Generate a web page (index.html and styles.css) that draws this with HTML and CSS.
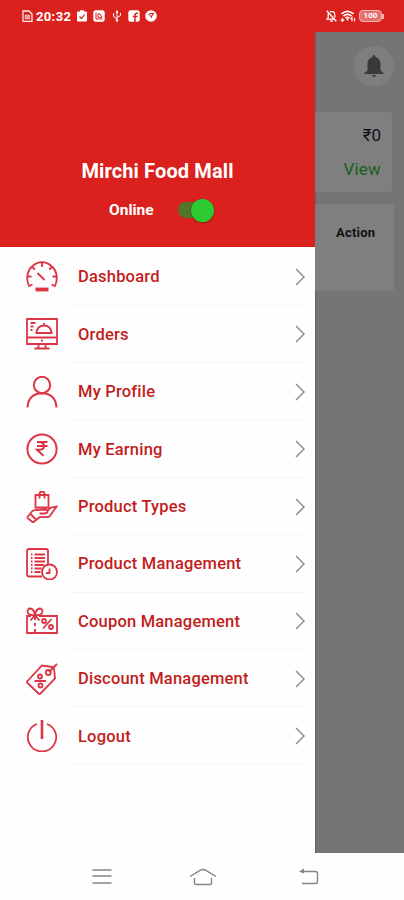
FILE: index.html
```html
<!DOCTYPE html>
<html lang="en">
<head>
<meta charset="utf-8">
<title>Mirchi Food Mall</title>
<link rel="stylesheet" href="styles.css">
</head>
<body>
<div class="status">
  <div class="status-left">
    <svg width="11" height="12" viewBox="0 0 11 12" fill="none" stroke="#fff" stroke-opacity=".9"><path d="M1 1h6l3 3v7.300H1z" stroke-width="1.300"/><path d="M3.500 5.500l4 3m0-3l-4 3M3.300 5.300h4.400v3.400H3.300z" stroke-width=".8"/></svg>
    <span class="time">20:32</span>
    <svg class="s1" width="10" height="12" viewBox="0 0 10 12"><path d="M1 1.500h2V.300h4v1.200h2q1 0 1 1v8q0 1-1 1H1q-1 0-1-1v-8q0-1 1-1z" fill="#fff"/><path d="M2.500 6.500l2 2 3-4" fill="none" stroke="#db211e" stroke-width="1.200"/></svg>
    <svg class="s2" width="12" height="12" viewBox="0 0 12 12"><rect x=".3" y=".3" width="11.400" height="11.400" rx="2.500" fill="#fff"/><path d="M3 2.500v6.500h6.500M5 3.500v3.800h4M5 4h2l2 3" fill="none" stroke="#db211e"/></svg>
    <svg class="s3" width="10" height="12" viewBox="0 0 10 12" fill="none" stroke="#fff"><path d="M5 1.500v9M1.500 4v2.500L5 9M8.500 3v2.500L5 7.500"/><path d="M3.300 2.700L5 0l1.700 2.700z" fill="#fff" stroke="none"/><circle cx="5" cy="10.500" r="1.200" fill="#fff" stroke="none"/><circle cx="1.500" cy="4" r=".7" fill="#fff" stroke="none"/></svg>
    <svg class="s4" width="12" height="12" viewBox="0 0 12 12"><rect x=".3" y=".3" width="11.400" height="11.400" rx="2.500" fill="#fff"/><path d="M7 12V5.200q0-2 2-2h1M4.800 6.500h4.700" fill="none" stroke="#db211e" stroke-width="1.500"/></svg>
    <svg class="s5" width="12" height="12" viewBox="0 0 12 12"><circle cx="6" cy="6" r="5.800" fill="#fff"/><path d="M3.500 5Q5 2.800 8.500 3.500L6.500 6.500 4.800 5.500M6 7.500h1" fill="none" stroke="#db211e" stroke-width="1.100"/></svg>
  </div>
  <div class="status-right">
    <svg width="11" height="12" viewBox="0 0 11 12" fill="none" stroke="#fff" stroke-width="1.300"><path d="M.7.700l9.600 10.600M2.200 3.500v4L1 9.200h7M3.800 1.900Q8.600.500 8.800 4.500v3M4.300 11h2.500"/></svg>
    <svg width="16" height="12" viewBox="0 0 16 12" fill="none" stroke="#fff" stroke-width="1.700"><path d="M1.500 3.800Q7.500-1 13.500 3.800M3.500 6Q7.500 2.800 11.500 6M5.500 8.200Q7.500 6.500 9.500 8.200"/><circle cx="7.500" cy="9.500" r="1" fill="#fff" stroke="none"/><path d="M2.500 8v3M.8 9.500L2.500 11.300 4.200 9.500M12 11.500v-4l-1.400 1.500M14.500 8v3.500" stroke-width="1.100"/></svg>
    <span class="battery">100</span><i class="nub"></i>
  </div>
</div>

<div class="main">
  <div class="drawer">
    <div class="head">
      <h1>Mirchi Food Mall</h1>
      <div class="online"><span>Online</span><span class="switch"><i></i></span></div>
    </div>
    <ul class="menu">
      <li>
        <svg class="ico" viewBox="0 0 32 32"><path d="M6.500 23.500L3 25C-.5 17 1.500 9 6.300 5.200Q11 1.200 16 1.200T25.700 5.200C30.500 9 32.500 17 29 25L25.500 23.500M16 1v5M5.800 5.500l3 3M26.200 5.500l-3 3M1 15.500h4.500M31 15.500h-4.500M11.500 12l7 7"/><path d="M9.500 28.500h13" stroke-width="3.800"/></svg>
        <span class="name">Dashboard</span><svg class="chev" viewBox="0 0 10 18"><path d="M1 1l8 8-8 8"/></svg>
      </li>
      <li>
        <svg class="ico" viewBox="0 0 32 32"><path d="M1 1h30v25H1zM1 19.500h30M12.500 26v3.500M19.500 26v3.500M8.500 30.500h15M9.500 15h17M10.500 14.500Q11.500 7.500 18 7.500t7.500 7M18 7.500V5M4.500 5h5M4.500 8.500h3M4.500 12h2M15 22.700h2"/></svg>
        <span class="name">Orders</span><svg class="chev" viewBox="0 0 10 18"><path d="M1 1l8 8-8 8"/></svg>
      </li>
      <li>
        <svg class="ico" viewBox="0 0 32 32"><g stroke-width="2"><circle cx="16" cy="9" r="8.200"/><path d="M1.500 31.500Q2.500 17.500 16 17.300 29.500 17.500 30.500 31.500"/></g></svg>
        <span class="name">My Profile</span><svg class="chev" viewBox="0 0 10 18"><path d="M1 1l8 8-8 8"/></svg>
      </li>
      <li>
        <svg class="ico" viewBox="0 0 32 32"><circle cx="16" cy="16" r="14.600" stroke-width="2"/><path d="M11 9h10.500M11 13h10.500M11 9.200h3q4 .3 4 3.800t-4 3.800h-3l6.500 6" stroke-width="2"/></svg>
        <span class="name">My Earning</span><svg class="chev" viewBox="0 0 10 18"><path d="M1 1l8 8-8 8"/></svg>
      </li>
      <li>
        <svg class="ico" viewBox="0 0 32 32"><path d="M9.500 4H22.500V16.500H9.500zM13.500 7.500V3q0-2.500 2.500-2.500T18.500 3v4.500M1 26.500l5-6q2-2 5-1.500l8-.5q3 0 2.500 2-.5 2-3 2h-5M21 20l4-3.500 5.500-.8-6.500 9q-1 1.500-3 1.500h-7.500L7 31.500 1 26.500M4.500 23L10 28.500"/></svg>
        <span class="name">Product Types</span><svg class="chev" viewBox="0 0 10 18"><path d="M1 1l8 8-8 8"/></svg>
      </li>
      <li>
        <svg class="ico" viewBox="0 0 32 32"><path d="M16 28.500H3q-2 0-2-2V3q0-2 2-2h17q2 0 2 2v14M5 6.500h1.500M5 10h1.500M5 13.500h1.500M5 17h1.500M5 20.500h1.500M5 24h1.500M8.500 6.500H19M8.500 10H19M8.500 13.500H19M8.500 17H18M8.500 20.500h7M8.500 24h6M23.500 20.500V25H20"/><circle cx="23.500" cy="24" r="7.500"/></svg>
        <span class="name">Product Management</span><svg class="chev" viewBox="0 0 10 18"><path d="M1 1l8 8-8 8"/></svg>
      </li>
      <li>
        <svg class="ico" viewBox="0 0 32 32"><path d="M5 11H1v17h30V11H13M9 10Q3 11 1.700 7.500 1 3.500 4.500 3.500 8 4 9 10q1-6 4.500-6.500Q17 3.500 16.300 7.500 15 11 9 10L4.500 15.500M9 10l4.500 5.500M9 12v3M9 18v3M9 24v3M17 23.500l8.500-9.500"/><circle cx="18" cy="16" r="2"/><circle cx="25" cy="22" r="2"/></svg>
        <span class="name">Coupon Management</span><svg class="chev" viewBox="0 0 10 18"><path d="M1 1l8 8-8 8"/></svg>
      </li>
      <li>
        <svg class="ico" viewBox="0 0 32 32"><path d="M1.500 18L16 2.500 26.500 4q1.500.3 1.600 2L29 15.500 14.500 30.500q-1 1-2 0L1.500 20q-1-1 0-2zM31 1l-8 8M8.500 18h11.500"/><circle cx="22.300" cy="9.500" r="2.500"/><circle cx="14" cy="13.500" r="2"/><circle cx="14.500" cy="22.500" r="2"/></svg>
        <span class="name">Discount Management</span><svg class="chev" viewBox="0 0 10 18"><path d="M1 1l8 8-8 8"/></svg>
      </li>
      <li>
        <svg class="ico" viewBox="0 0 32 32"><path d="M11 4A14.200 14.200 0 1 0 21 4"/><path d="M16 0v19" stroke-width="2.600"/></svg>
        <span class="name">Logout</span><svg class="chev" viewBox="0 0 10 18"><path d="M1 1l8 8-8 8"/></svg>
      </li>
    </ul>
  </div>
  <div class="page">
    <div class="bell"><svg width="20" height="22" viewBox="0 0 20 22"><path d="M10 0q1.500 0 1.500 2Q16.500 3.500 16.500 9v6.500L19.500 18v1H.5v-1l3-2.500V9Q3.500 3.500 8.500 2 8.500 0 10 0zM8 20h4q-.5 2-2 2t-2-2z" fill="#393939"/></svg></div>
    <div class="card balance"><span>₹0</span><span class="view">View</span></div>
    <div class="card action">Action</div>
  </div>
</div>

<div class="nav">
  <svg width="20" height="18" viewBox="0 0 20 18"><path d="M.5 2h19M.5 8h19M.5 15h19"/></svg>
  <svg class="home" width="28" height="18" viewBox="0 0 28 18"><path d="M1 8.500L11 2.300q3-1.600 6 0l10 6.200M5.500 10v5q0 1.500 1.500 1.500h14q1.500 0 1.500-1.500v-5"/></svg>
  <svg width="20" height="18" viewBox="0 0 20 18"><path d="M2 3.500h14.500q2 0 2 2v8q0 2-2 2H3"/><path d="M0 3.500L5 .5v5z" fill="#858585" stroke="none"/></svg>
</div>
</body>
</html>
```

FILE: styles.css
```css
* { box-sizing: border-box; }
body {
  margin: 0;
  width: 404px;
  height: 900px;
  overflow: hidden;
  display: flex;
  flex-direction: column;
  font-family: Roboto, "Noto Sans", sans-serif;
  background: #fefefe;
}
.status {
  height: 32px;
  flex: none;
  background: #db211e;
  color: #fff;
  display: flex;
  justify-content: space-between;
  padding: 0 20px 0 22px;
}
.status-left, .status-right { display: flex; align-items: center; }
.status-right { gap: 3px; }
.time { font-size: 13px; font-weight: 700; margin-left: 3px; width: 36px; letter-spacing: .35px; }
.s1 { margin-left: 5px; }
.s2 { margin-left: 6px; }
.s3 { margin-left: 7px; }
.s4 { margin-left: 6px; }
.s5 { margin-left: 5px; }
.battery {
  width: 23px;
  height: 12px;
  border: 1.5px solid #f6b5b2;
  border-radius: 4px;
  background: #e56f6c;
  font-size: 8px;
  line-height: 9px;
  font-weight: 700;
  text-align: center;
}
.nub { width: 2px; height: 5px; background: #f6b5b2; margin-left: -3px; }

.main { height: 821px; flex: none; display: flex; }
.drawer { width: 315px; background: #fefefe; }
.head {
  height: 215px;
  background: #db211e;
  color: #fff;
  display: flex;
  flex-direction: column;
  align-items: center;
  padding-top: 126px;
}
h1 { margin: 0; font-size: 20px; line-height: 26px; font-weight: 700; letter-spacing: .12px; }
.online {
  display: flex;
  align-items: center;
  justify-content: space-between;
  width: 105px;
  margin: 14px 0 0 8px;
  height: 24px;
  font-size: 15.5px;
  font-weight: 700;
}
.switch {
  width: 36px;
  height: 16px;
  border-radius: 8px;
  background: #537529;
  display: flex;
  align-items: center;
  justify-content: flex-end;
}
.switch i {
  width: 23px;
  height: 23px;
  flex: none;
  border-radius: 50%;
  background: #2eca33;
  box-shadow: 0 1px 2px rgba(60, 30, 0, .5);
}
.menu { list-style: none; margin: 0; padding: 1.3px 0 0; }
.menu li {
  height: 57.4px;
  display: flex;
  align-items: center;
  padding: 0 10px 0 26px;
  background: linear-gradient(#f4f4f4, #f4f4f4) right 7px bottom / 236px 1px no-repeat;
}
.ico { width: 32px; height: 32px; fill: none; stroke: #dc3545; stroke-width: 1.8; }
.name {
  flex: 1;
  margin-left: 20px;
  font-size: 16.5px;
  font-weight: 500;
  color: #c21d1d;
  letter-spacing: .2px;
  white-space: nowrap;
}
.chev { width: 10px; height: 18px; fill: none; stroke: #8c8c8c; stroke-width: 1.5; }

.page {
  flex: 1;
  background: #757575;
  box-shadow: inset 2px 0 2px -1px #5f5f5f;
  overflow: hidden;
  padding-top: 14px;
}
.bell {
  width: 40px;
  height: 40px;
  margin-left: 39px;
  border-radius: 50%;
  background: #7e7e7e;
  display: flex;
  align-items: center;
  justify-content: center;
}
.card { background: #7f7f7f; border-radius: 0 3px 3px 0; color: #111; }
.balance {
  width: 77px;
  height: 80px;
  margin-top: 26px;
  padding: 11px 11px 0 0;
  display: flex;
  flex-direction: column;
  align-items: flex-end;
  gap: 10px;
  font-size: 17px;
  line-height: 24px;
}
.view { color: #15601c; letter-spacing: .2px; }
.action {
  width: 79px;
  height: 87px;
  margin-top: 12px;
  padding: 20px 0 0 21px;
  font-size: 13px;
  line-height: 18px;
  font-weight: 700;
  letter-spacing: .2px;
}
.nav {
  height: 47px;
  display: flex;
  align-items: center;
  justify-content: space-between;
  padding: 1px 85px 0 92px;
}
.nav svg { fill: none; stroke: #858585; stroke-width: 1.4; }
.nav .home { margin-right: 6px; }
```
